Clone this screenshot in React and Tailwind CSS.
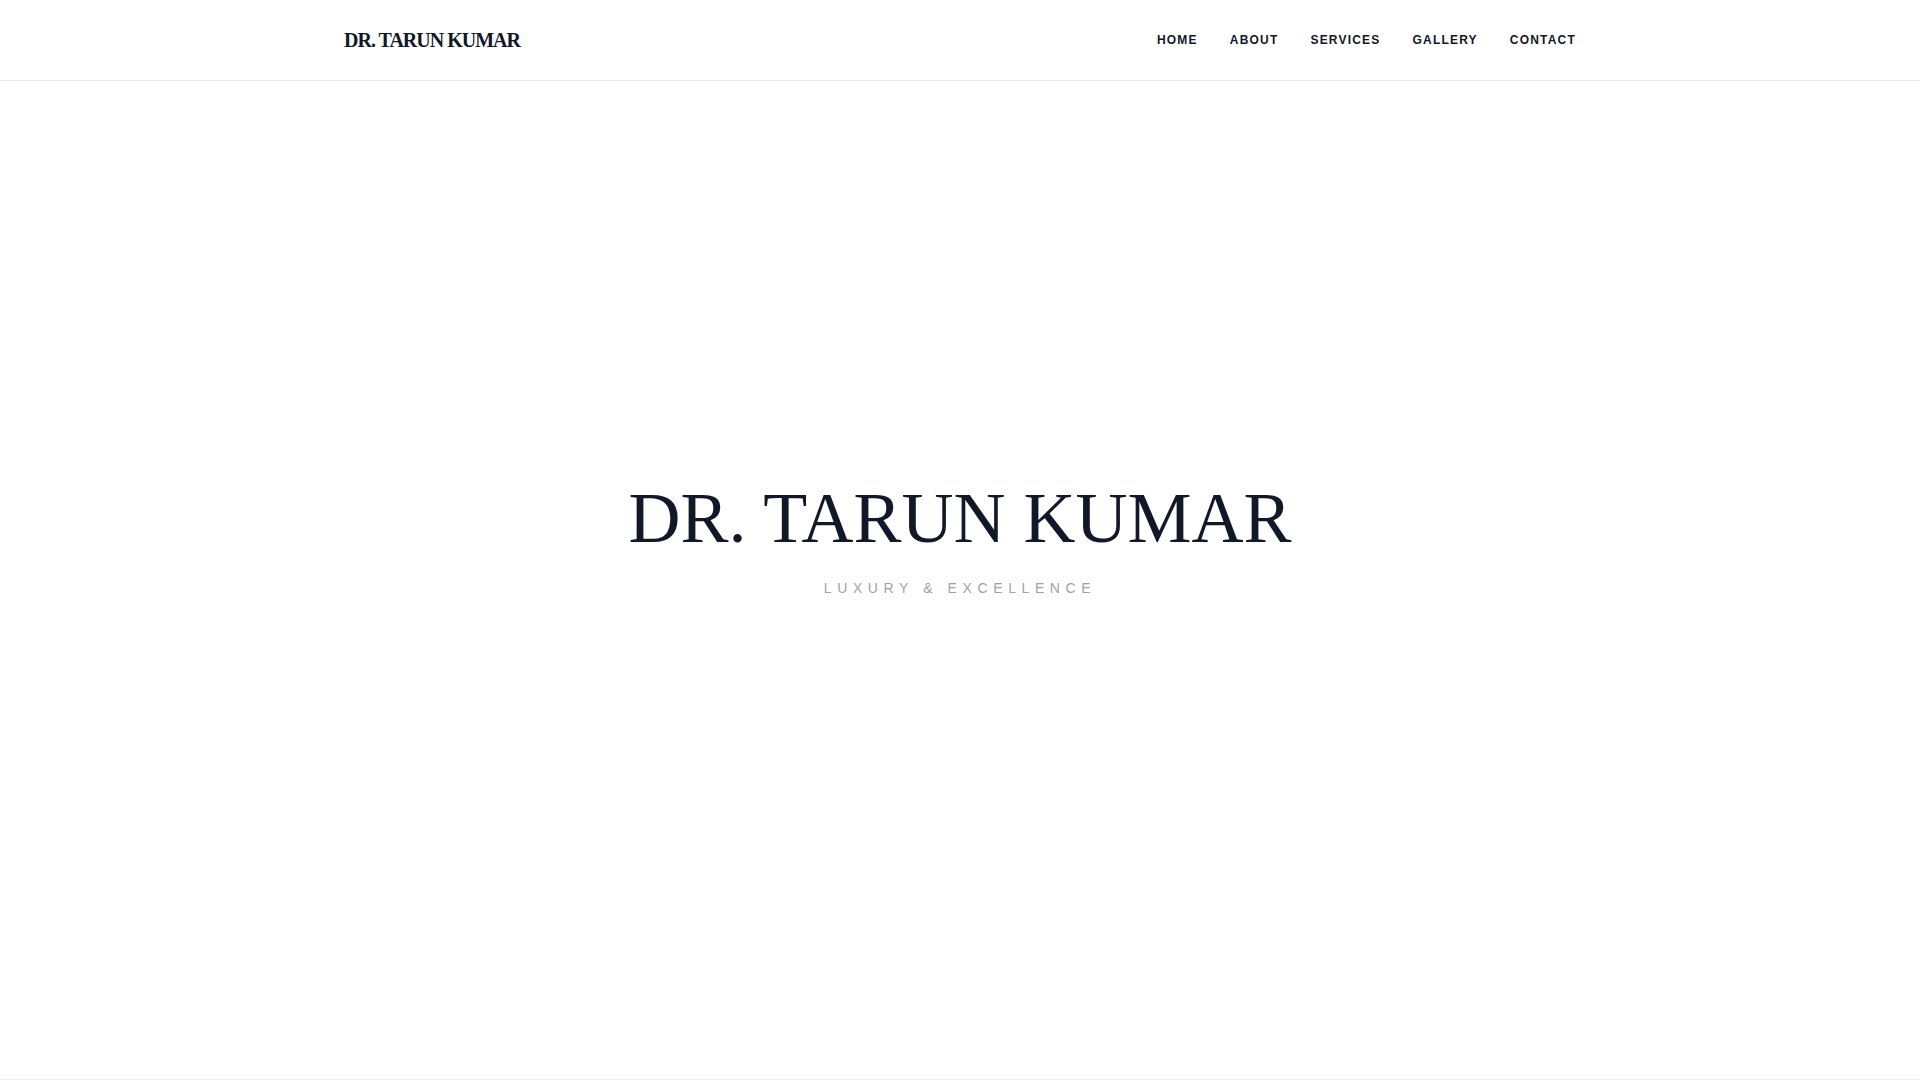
const links = ['Home', 'About', 'Services', 'Gallery', 'Contact'];

export default function App() {
  return (
    <div className="min-h-screen bg-white text-[#111827] font-['Liberation_Sans',Arial,sans-serif]">
      {/* Nav */}
      <header className="fixed top-0 inset-x-0 z-50 bg-white border-b border-[#e5e7eb]">
        <div className="max-w-7xl mx-auto px-6 h-20 flex items-center justify-between">
          <a href="#" className="text-xl font-bold tracking-tighter text-[#111827] font-['Liberation_Serif','Times_New_Roman',serif]">
            DR. TARUN KUMAR
          </a>
          <nav className="flex items-center gap-8">
            {links.map((l) => (
              <a key={l} href={`#${l.toLowerCase()}`} className="text-xs font-bold uppercase tracking-widest text-[#111827]">
                {l}
              </a>
            ))}
          </nav>
        </div>
      </header>

      {/* Hero */}
      <section id="home" className="h-screen flex flex-col items-center justify-center border-b border-[#f0f0f0] bg-white">
        <h1 className="text-7xl leading-none font-normal text-[#111827] font-['Liberation_Serif','Times_New_Roman',serif]">
          DR. TARUN KUMAR
        </h1>
        <p className="mt-6 text-sm uppercase tracking-[0.4em] text-[#9ca3af]">Luxury &amp; Excellence</p>
      </section>
    </div>
  );
}
